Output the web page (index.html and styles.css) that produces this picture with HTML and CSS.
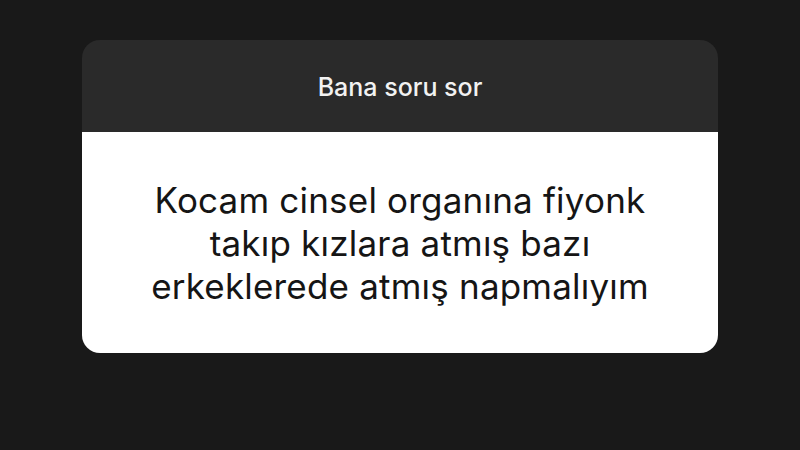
FILE: index.html
```html
<!DOCTYPE html>
<html lang="tr">
<head>
<meta charset="utf-8">
<link rel="stylesheet" href="styles.css">
</head>
<body>
<div class="page">
  <div class="card">
    <div class="card-head">Bana soru sor</div>
    <div class="card-body">
      <p class="answer">Kocam cinsel organına fiyonk<br>takıp kızlara atmış bazı<br>erkeklerede atmış napmalıyım</p>
    </div>
  </div>
</div>
</body>
</html>
```
FILE: styles.css
```css
html, body {
  margin: 0;
  padding: 0;
  background: #191919;
}
.page {
  width: 800px;
  height: 450px;
  padding-top: 40px;
  box-sizing: border-box;
  display: flex;
  justify-content: center;
  align-items: flex-start;
  font-family: Inter, "Liberation Sans", Arial, sans-serif;
}
.card {
  width: 636px;
  border-radius: 18px;
  overflow: hidden;
}
.card-head {
  height: 92px;
  background: #2a2a2a;
  color: #f2f2f2;
  font-size: 25px;
  font-weight: 500;
  display: flex;
  align-items: center;
  justify-content: center;
  padding-top: 2px;
  box-sizing: border-box;
}
.card-body {
  height: 221px;
  background: #ffffff;
  display: flex;
  align-items: center;
  justify-content: center;
}
.answer {
  margin: 0;
  padding-top: 2px;
  text-align: center;
  color: #151515;
  font-size: 35px;
  font-weight: 400;
  letter-spacing: 0.2px;
  line-height: 43px;
}
```
